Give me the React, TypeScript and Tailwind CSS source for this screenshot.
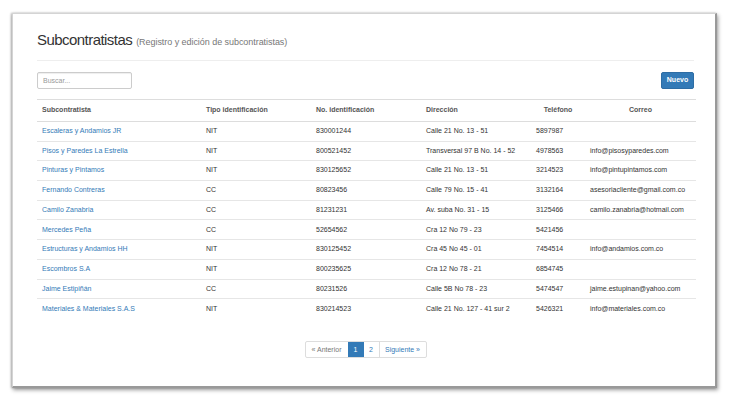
import React from "react";

interface Row {
  nombre: string;
  tipo: string;
  numero: string;
  direccion: string;
  telefono: string;
  correo: string;
}

const rows: Row[] = [
  { nombre: "Escaleras y Andamios JR", tipo: "NIT", numero: "830001244", direccion: "Calle 21 No. 13 - 51", telefono: "5897987", correo: "" },
  { nombre: "Pisos y Paredes La Estrella", tipo: "NIT", numero: "800521452", direccion: "Transversal 97 B No. 14 - 52", telefono: "4978563", correo: "info@pisosyparedes.com" },
  { nombre: "Pinturas y Pintamos", tipo: "NIT", numero: "830125652", direccion: "Calle 21 No. 13 - 51", telefono: "3214523", correo: "info@pintupintamos.com" },
  { nombre: "Fernando Contreras", tipo: "CC", numero: "80823456", direccion: "Calle 79 No. 15 - 41", telefono: "3132164", correo: "asesoriacliente@gmail.com.co" },
  { nombre: "Camilo Zanabria", tipo: "CC", numero: "81231231", direccion: "Av. suba No. 31 - 15", telefono: "3125466", correo: "camilo.zanabria@hotmail.com" },
  { nombre: "Mercedes Peña", tipo: "CC", numero: "52654562", direccion: "Cra 12 No 79 - 23", telefono: "5421456", correo: "" },
  { nombre: "Estructuras y Andamios HH", tipo: "NIT", numero: "830125452", direccion: "Cra 45 No 45 - 01", telefono: "7454514", correo: "info@andamios.com.co" },
  { nombre: "Escombros S.A", tipo: "NIT", numero: "800235625", direccion: "Cra 12 No 78 - 21", telefono: "6854745", correo: "" },
  { nombre: "Jaime Estipiñán", tipo: "CC", numero: "80231526", direccion: "Calle 5B No 78 - 23", telefono: "5474547", correo: "jaime.estupinan@yahoo.com" },
  { nombre: "Materiales & Materiales S.A.S", tipo: "NIT", numero: "830214523", direccion: "Calle 21 No. 127 - 41 sur 2", telefono: "5426321", correo: "info@materiales.com.co" },
];

export default function App() {
  return (
    <div className="w-[729px] h-[407px] bg-white pt-[13px] pl-[12px] font-['Liberation_Sans',Arial,sans-serif] text-[#333]">
      <div className="w-[705px] h-[375px] bg-white border border-[#d4d4d4] border-r-2 border-b-2 border-r-[#999] border-b-[#999] shadow-[1px_2px_4px_rgba(0,0,0,0.4),-1px_0_2px_rgba(0,0,0,0.25)] pl-[24px] pr-[21px]">
        <div className="flex items-baseline gap-[4px] pt-[17px] h-[46px]">
          <h1 className="text-[15px] leading-[18px] tracking-[-0.55px] text-[#333]">Subcontratistas</h1>
          <span className="text-[9px] tracking-[-0.05px] text-[#777]">(Registro y edición de subcontratistas)</span>
        </div>
        <div className="border-t border-[#eee]" />
        <div className="flex justify-between items-center mt-[11px] h-[17px]">
          <input
            placeholder="Buscar..."
            className="w-[95px] h-[17px] border border-[#ccc] rounded-[2px] px-[5px] text-[7px] placeholder:text-[#999] outline-none shadow-[inset_0_1px_1px_rgba(0,0,0,0.07)]"
          />
          <button className="w-[33px] h-[17px] bg-[#337ab7] border border-[#2e6da4] rounded-[2px] text-white text-[7px] font-bold">
            Nuevo
          </button>
        </div>
        <table className="w-full table-fixed border-collapse mt-[10px] text-[7px]">
          <colgroup>
            <col className="w-[164px]" />
            <col className="w-[110px]" />
            <col className="w-[110px]" />
            <col className="w-[110px]" />
            <col className="w-[54px]" />
            <col className="w-[111px]" />
          </colgroup>
          <thead>
            <tr className="h-[22px] border-t border-b border-[#ddd] text-[#555]">
              <th className="px-[5px] text-left font-bold">Subcontratista</th>
              <th className="px-[5px] text-left font-bold">Tipo identificación</th>
              <th className="px-[5px] text-left font-bold">No. identificación</th>
              <th className="px-[5px] text-left font-bold">Dirección</th>
              <th className="px-[5px] text-center font-bold">Teléfono</th>
              <th className="px-[5px] text-center font-bold">Correo</th>
            </tr>
          </thead>
          <tbody>
            {rows.map((r, i) => (
              <tr
                key={r.numero}
                className={`h-[19.7px] ${i < rows.length - 1 ? "border-b border-[#e6e6e6]" : ""}`}
              >
                <td className="px-[5px] text-[#337ab7] whitespace-nowrap">{r.nombre}</td>
                <td className="px-[5px]">{r.tipo}</td>
                <td className="px-[5px]">{r.numero}</td>
                <td className="px-[5px] whitespace-nowrap">{r.direccion}</td>
                <td className="px-[5px]">{r.telefono}</td>
                <td className="px-[5px] whitespace-nowrap">{r.correo}</td>
              </tr>
            ))}
          </tbody>
        </table>
        <div className="flex justify-center mt-[23px]">
          <div className="flex h-[17px] text-[7px] border border-[#ddd] rounded-[2px]">
            <span className="w-[42px] flex items-center justify-center text-[#777]">« Anterior</span>
            <span className="w-[16px] flex items-center justify-center bg-[#337ab7] text-white">1</span>
            <span className="w-[16px] flex items-center justify-center text-[#337ab7] border-r border-[#ddd]">2</span>
            <span className="w-[46px] flex items-center justify-center text-[#337ab7]">Siguiente »</span>
          </div>
        </div>
      </div>
    </div>
  );
}
